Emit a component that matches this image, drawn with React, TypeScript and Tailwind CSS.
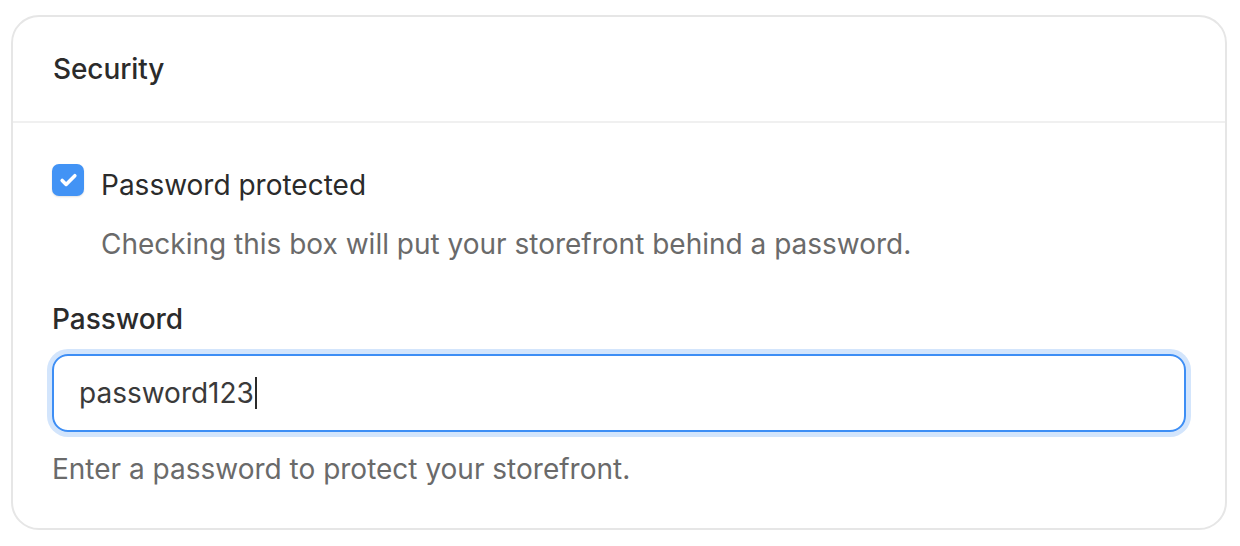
import { Check } from "lucide-react";

export default function App() {
  return (
    <div className="w-[1240px] h-[546px] bg-white pt-[15px] pl-[11px] font-['Inter','Noto_Sans',sans-serif] text-[#2b2b2b]">
      <div className="w-[1216px] h-[515px] rounded-[28px] border-2 border-[#e6e6e6] bg-white flex flex-col">
        <div className="h-[106px] flex items-center px-[40px] border-b-2 border-[#f0f0f0]">
          <h2 className="text-[28px] font-medium leading-none tracking-[-0.1px]">Security</h2>
        </div>
        <div className="flex flex-col px-[39px] pt-[41px]">
          <label className="flex items-start gap-[17px]">
            <span className="w-[32px] h-[32px] shrink-0 rounded-[7px] bg-[#4293f5] flex items-center justify-center shadow-[0_1px_2px_rgba(0,0,0,0.12)]">
              <Check className="w-[19px] h-[19px] text-white" strokeWidth={4.5} />
            </span>
            <span className="text-[28px] leading-[40px] mt-[1px]">Password protected</span>
          </label>
          <p className="ml-[49px] mt-[19px] text-[28px] leading-[40px] text-[#6a6a6a]">
            Checking this box will put your storefront behind a password.
          </p>
          <div className="mt-[35px] text-[28px] font-medium leading-[40px]">Password</div>
          <div className="mt-[15px] h-[78px] rounded-[16px] border-2 border-[#3d8ef5] ring-[5px] ring-[#d3e5fc] flex items-center px-[25px]">
            <span className="text-[28px] text-[#3a3a3a]">password123</span>
            <span className="w-[2px] h-[32px] bg-[#2b2b2b] ml-[1px]" />
          </div>
          <p className="mt-[17px] text-[28px] leading-[40px] text-[#6a6a6a]">
            Enter a password to protect your storefront.
          </p>
        </div>
      </div>
    </div>
  );
}
